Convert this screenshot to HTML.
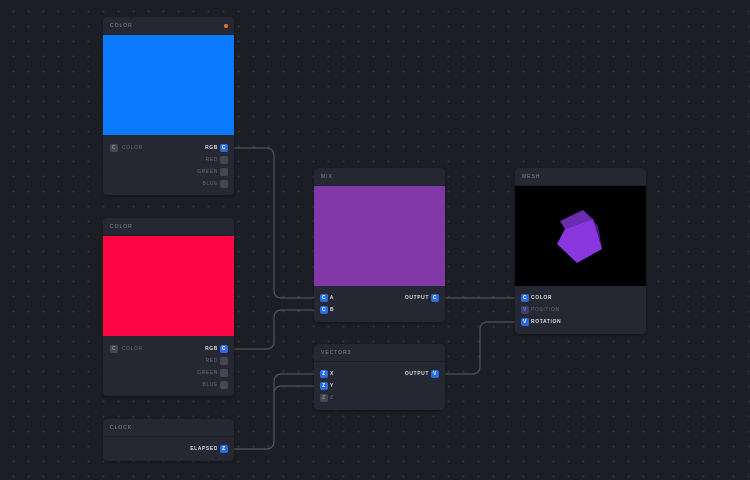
<!DOCTYPE html>
<html><head><meta charset="utf-8"><style>
*{margin:0;padding:0;box-sizing:border-box}
body{width:750px;height:480px;overflow:hidden;background:#1c1e26;background-image:radial-gradient(circle,#33363f 0.8px,transparent 1.2px);background-size:15px 15px;background-position:6px 4px;font-family:"Liberation Sans",sans-serif;position:relative}
.node{position:absolute;background:#252733;border-radius:4px;box-shadow:0 1px 3px rgba(0,0,0,.4)}
.hd{height:18px;border-bottom:1px solid #1c1e26;color:#8a8d98;font-size:5px;letter-spacing:1px;padding:6px 0 0 7px;position:relative}
.img{width:100%;height:100px}
.row{position:absolute;font-size:5px;font-weight:bold;letter-spacing:.6px;color:#d8dae0;height:9px;line-height:9px}
.b{display:inline-block;width:8px;height:8px;border-radius:2px;background:#2a6be0;color:#fff;font-size:5px;text-align:center;line-height:8px;vertical-align:top;font-weight:bold}
.g{background:#454852;color:#8a8d98}
.dim{color:#6a6d78;font-weight:normal}
svg{position:absolute;left:0;top:0}
</style></head><body>
<svg width="750" height="480"><g fill="none" stroke="#4e525e" stroke-width="1.2">
<path d="M228 148H266Q274 148 274 156V290Q274 298 282 298H320"/>
<path d="M228 349H266Q274 349 274 341V318Q274 310 282 310H320"/>
<path d="M228 449H266Q274 449 274 441V382Q274 374 282 374H320"/>
<path d="M228 449H266Q274 449 274 441V394Q274 386 282 386H320"/>
<path d="M439 298H521"/>
<path d="M439 374H472Q480 374 480 366V330Q480 322 488 322H521"/>
</g></svg>

<div class="node" style="left:103px;top:17px;width:131px;height:178px">
<div class="hd">COLOR<span style="position:absolute;right:6px;top:7px;width:4px;height:4px;border-radius:50%;background:#e0703a"></span></div>
<div class="img" style="background:#0a7aff"></div>
<div class="row" style="left:7px;top:127px"><span class="b g">C</span> <span class="dim">&nbsp;COLOR</span></div>
<div class="row" style="right:6px;top:127px">RGB <span class="b">C</span></div>
<div class="row dim" style="right:6px;top:139px">RED <span class="b g"></span></div>
<div class="row dim" style="right:6px;top:151px">GREEN <span class="b g"></span></div>
<div class="row dim" style="right:6px;top:163px">BLUE <span class="b g"></span></div>
</div>

<div class="node" style="left:103px;top:218px;width:131px;height:178px">
<div class="hd">COLOR</div>
<div class="img" style="background:#ff0745"></div>
<div class="row" style="left:7px;top:127px"><span class="b g">C</span> <span class="dim">&nbsp;COLOR</span></div>
<div class="row" style="right:6px;top:127px">RGB <span class="b">C</span></div>
<div class="row dim" style="right:6px;top:139px">RED <span class="b g"></span></div>
<div class="row dim" style="right:6px;top:151px">GREEN <span class="b g"></span></div>
<div class="row dim" style="right:6px;top:163px">BLUE <span class="b g"></span></div>
</div>

<div class="node" style="left:103px;top:419px;width:131px;height:42px">
<div class="hd">CLOCK</div>
<div class="row" style="right:6px;top:26px">ELAPSED <span class="b">Z</span></div>
</div>

<div class="node" style="left:314px;top:168px;width:131px;height:154px">
<div class="hd">MIX</div>
<div class="img" style="background:#8338a8"></div>
<div class="row" style="left:6px;top:126px"><span class="b">C</span> A</div>
<div class="row" style="left:6px;top:138px"><span class="b">C</span> B</div>
<div class="row" style="right:6px;top:126px">OUTPUT <span class="b">C</span></div>
</div>

<div class="node" style="left:314px;top:344px;width:131px;height:66px">
<div class="hd">VECTOR3</div>
<div class="row" style="left:6px;top:26px"><span class="b">Z</span> X</div>
<div class="row" style="left:6px;top:38px"><span class="b">Z</span> Y</div>
<div class="row dim" style="left:6px;top:50px"><span class="b g">Z</span> Z</div>
<div class="row" style="right:6px;top:26px">OUTPUT <span class="b">V</span></div>
</div>

<div class="node" style="left:515px;top:168px;width:131px;height:166px">
<div class="hd">MESH</div>
<svg style="position:relative;display:block" width="131" height="100" viewBox="515 186 131 100"><rect x="515" y="186" width="131" height="100" fill="#000"/>
<polygon points="560,221 583,210 593,219 565,229" fill="#6a2cb0"/>
<polygon points="583,210 598,226 602,249 593,219" fill="#4a1e80"/>
<polygon points="565,229 593,219 602,249 577,263 557,244" fill="#8a36de"/></svg>
<div class="row" style="left:6px;top:126px"><span class="b">C</span> COLOR</div>
<div class="row dim" style="left:6px;top:138px"><span class="b" style="background:#3a3f70;color:#7a7fb0">V</span> POSITION</div>
<div class="row" style="left:6px;top:150px"><span class="b">V</span> ROTATION</div>
</div>
</body></html>
